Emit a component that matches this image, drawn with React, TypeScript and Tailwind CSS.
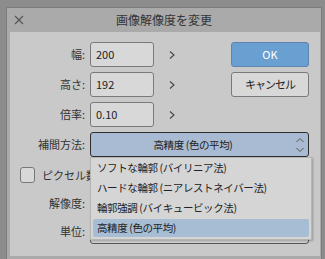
import React from "react";

const font = { fontFamily: '"Noto Sans CJK JP", "Noto Sans", sans-serif' };

function Chevron() {
  return (
    <svg width="8" height="10" viewBox="0 0 8 10" className="block">
      <path d="M2 1.5 L6 5 L2 8.5" fill="none" stroke="#454545" strokeWidth="1.1" />
    </svg>
  );
}

function Row({ label, value }: { label: string; value: string }) {
  return (
    <div className="flex items-center h-[25px]">
      <div className="w-[76px] text-right text-[11px] text-[#333] pr-[1px]">{label}</div>
      <div className="ml-[4px] w-[64px] h-[25px] rounded-[3px] border border-[#7a7a7a] bg-[#d8d8d8] flex items-center pl-[5px] text-[11px] text-[#222]">
        {value}
      </div>
      <div className="ml-[14px]">
        <Chevron />
      </div>
    </div>
  );
}

export default function App() {
  const items = [
    "ソフトな輪郭 (バイリニア法)",
    "ハードな輪郭 (ニアレストネイバー法)",
    "輪郭強調 (バイキュービック法)",
    "高精度 (色の平均)",
  ];
  return (
    <div className="w-[325px] h-[259px] overflow-hidden bg-[#8c8c8c] pl-[6px] pt-[7px]" style={font}>
      <div className="w-[316px] h-[260px] border border-[#7c7c7c] bg-[#aaaaaa] flex flex-col">
        <div className="relative h-[24px] flex items-center justify-center">
          <svg width="10" height="10" viewBox="0 0 10 10" className="absolute left-[7px] top-[7px]">
            <path d="M1 1 L9 9 M9 1 L1 9" stroke="#555" strokeWidth="1.1" />
          </svg>
          <span className="text-[12px] text-[#333] leading-none">画像解像度を変更</span>
        </div>
        <div className="ml-[3px] mr-[1px] h-[224px] bg-[#c9c9c9] relative pt-[10px]">
          <div className="flex">
            <div className="flex flex-col gap-[5px] w-[221px]">
              <Row label="幅:" value="200" />
              <Row label="高さ:" value="192" />
              <Row label="倍率:" value="0.10" />
            </div>
            <div className="flex flex-col gap-[5px]">
              <div className="w-[78px] h-[25px] rounded-[3px] border border-[#5d84ad] bg-[#6a9fd2] flex items-center justify-center text-white text-[11px]">
                OK
              </div>
              <div className="w-[78px] h-[25px] rounded-[3px] border border-[#7a7a7a] bg-[#d8d8d8] flex items-center justify-center text-[#222] text-[11px] tracking-[-1px]">
                キャンセル
              </div>
            </div>
          </div>
          <div className="flex items-center h-[25px] mt-[5px]">
            <div className="w-[76px] text-right text-[11px] text-[#333] pr-[1px]">補間方法:</div>
            <div className="ml-[4px] w-[219px] h-[25px] rounded-[3px] border border-[#2e2e2e] bg-[#a9bbd3] relative flex items-center justify-center pr-[13px] text-[10.5px] tracking-[-0.4px] text-[#222]">
              高精度 (色の平均)
              <svg width="10" height="18" viewBox="0 0 10 18" className="absolute right-[3px] top-[3px]">
                <path d="M1.5 6 L5 2.5 L8.5 6 M1.5 12 L5 15.5 L8.5 12" fill="none" stroke="#555" strokeWidth="1" />
              </svg>
            </div>
          </div>
          <div className="flex items-center mt-[10px] ml-[10px] h-[16px]">
            <div className="w-[15px] h-[16px] shrink-0 rounded-[3px] border border-[#777] bg-[#d8d8d8]" />
            <span className="ml-[7px] w-[48px] overflow-hidden whitespace-nowrap text-[11px] text-[#333]">ピクセル数</span>
          </div>
          <div className="flex items-center h-[25px] mt-[8px]">
            <div className="w-[76px] text-right text-[11px] text-[#333] pr-[1px]">解像度:</div>
            <div className="ml-[4px] w-[64px] h-[25px] rounded-[3px] border border-[#7a7a7a] bg-[#d8d8d8]" />
          </div>
          <div className="flex items-center h-[25px] mt-[3px]">
            <div className="w-[76px] text-right text-[11px] text-[#333] pr-[1px]">単位:</div>
            <div className="ml-[4px] w-[219px] h-[25px] rounded-[3px] border border-[#555] bg-[#d0d0d0]" />
          </div>
          <div className="absolute left-[80px] top-[125px] w-[222px] h-[83px] bg-[#d5d5d5] border border-[#b5b5b5] shadow-[1px_1px_2px_rgba(0,0,0,0.25)]">
            {items.map((t, i) => (
              <div key={i} className="h-[20px] px-[2px] py-[1px]">
                <div
                  className={
                    "h-[18px] rounded-[2px] flex items-center pl-[4px] text-[10.5px] tracking-[-0.4px] text-[#222] " +
                    (i === 3 ? "bg-[#a7bdd3]" : "")
                  }
                >
                  {t}
                </div>
              </div>
            ))}
          </div>
        </div>
      </div>
    </div>
  );
}
